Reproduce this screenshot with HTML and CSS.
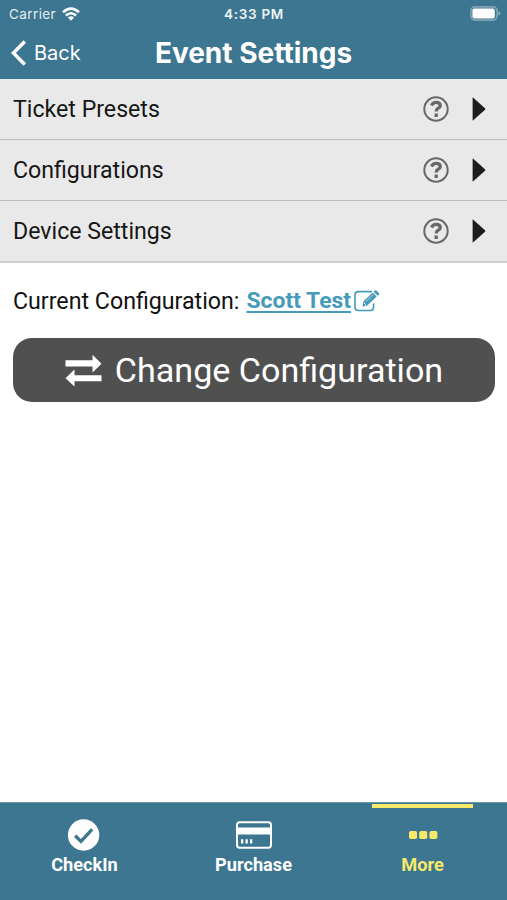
FILE: index.html
```html
<!DOCTYPE html>
<html lang="en">
<head>
<meta charset="utf-8">
<title>Event Settings</title>
<link rel="stylesheet" href="styles.css">
</head>
<body>
<div class="app">
  <header class="header">
    <div class="status">
      <div class="carrier"><span class="carrier-name">Carrier</span>
        <svg class="wifi" viewBox="0 0 18 14"><g fill="none" stroke="#fff" stroke-width="2.6"><path d="M1 5.3Q9-2.1 17 5.3"/><path d="M3.9 8.5Q9 4 14.1 8.5"/></g><path d="M5.9 10.6Q9 7.9 12.1 10.6L9 13.7Z" fill="#fff"/></svg>
      </div>
      <span class="time">4:33 PM</span>
      <svg class="battery" viewBox="0 0 31 15"><rect x=".9" y=".9" width="26.2" height="13.2" rx="4" fill="none" stroke="#fff" stroke-opacity=".35" stroke-width="1.6"/><rect x="2.4" y="2.6" width="22.4" height="9.8" rx="2" fill="#fff"/><path d="M28.5 5.2q1.7.6 1.7 2.2t-1.7 2.2z" fill="#fff" fill-opacity=".45"/></svg>
    </div>
    <nav class="navbar">
      <a class="back"><svg class="chevron" viewBox="0 0 16 26"><path d="M13.8 1.5 2.4 13l11.4 11.5" fill="none" stroke="#fff" stroke-width="3.5"/></svg><span>Back</span></a>
      <h1 class="title">Event Settings</h1>
    </nav>
  </header>
  <main class="content">
    <ul class="list">
      <li class="row"><span class="label">Ticket Presets</span><svg class="help" viewBox="0 0 26 26"><circle cx="13" cy="13" r="11.7"/><path class="mark" d="M8.5 9.5Q10 6.3 13 6.3q4.3 0 4.3 3.2 0 1.7-2.2 2.8-1.9 1-1.9 3.2M13.2 17.6v3.4"/></svg><svg class="arrow" viewBox="0 0 14 24"><path d="M.6.7Q.6.2 1.2.7L13 11.2q.7.8 0 1.6L1.2 23.3Q.6 23.8.6 23.2Z"/></svg></li>
      <li class="row"><span class="label">Configurations</span><svg class="help" viewBox="0 0 26 26"><circle cx="13" cy="13" r="11.7"/><path class="mark" d="M8.5 9.5Q10 6.3 13 6.3q4.3 0 4.3 3.2 0 1.7-2.2 2.8-1.9 1-1.9 3.2M13.2 17.6v3.4"/></svg><svg class="arrow" viewBox="0 0 14 24"><path d="M.6.7Q.6.2 1.2.7L13 11.2q.7.8 0 1.6L1.2 23.3Q.6 23.8.6 23.2Z"/></svg></li>
      <li class="row"><span class="label">Device Settings</span><svg class="help" viewBox="0 0 26 26"><circle cx="13" cy="13" r="11.7"/><path class="mark" d="M8.5 9.5Q10 6.3 13 6.3q4.3 0 4.3 3.2 0 1.7-2.2 2.8-1.9 1-1.9 3.2M13.2 17.6v3.4"/></svg><svg class="arrow" viewBox="0 0 14 24"><path d="M.6.7Q.6.2 1.2.7L13 11.2q.7.8 0 1.6L1.2 23.3Q.6 23.8.6 23.2Z"/></svg></li>
    </ul>
    <div class="current">
      <span class="current-label">Current Configuration:</span>
      <a class="current-name">Scott Test</a>
      <svg class="edit" viewBox="0 0 26 22"><path d="M18 1.6H4.2Q1 1.6 1 4.8v12.5q0 3.2 3.2 3.2h12.2q3.2 0 3.2-3.2v-3.8" fill="none" stroke="#459bb9" stroke-width="1.6"/><path d="m9.3 11.5 9.5-9.1 3.9 4-9.5 9.2-4.7.8zM19.6 1.7 20.7.6q.8-.8 1.7 0L25 3.1q.7.8 0 1.5l-1.4 1.2z" fill="#459bb9"/><path d="m11.7 11.8 7.5-7.2" stroke="#fff" stroke-width=".6"/><path d="m9.8 12.8 2 2" stroke="#fff" stroke-width="1"/></svg>
    </div>
    <button class="change"><svg class="swap" viewBox="0 0 37 33"><path d="M.5 6.3h27V.8l9 9-9 8.8v-6.2H.5zM36.5 21.3h-27v-5.8l-9 8.8 9 8.2v-5.3h27z" fill="#fff"/></svg><span>Change Configuration</span></button>
  </main>
  <footer class="tabs">
    <a class="tab"><svg class="tab-icon" viewBox="0 0 36 32"><circle cx="16.6" cy="16" r="15.7" fill="#fff"/><path d="m8.2 16.7 5.8 5.7L25.1 10.3" fill="none" stroke="#3d7690" stroke-width="3.3"/></svg><span>CheckIn</span></a>
    <a class="tab"><svg class="tab-icon" viewBox="0 0 36 32"><rect x="1" y="3.3" width="34" height="25.4" rx="2.8" fill="none" stroke="#fff" stroke-width="2"/><path d="M1 8.5h34v7H1zM5 20.3h2.3v4.3H5zM9.5 20.3h2.3v4.3H9.5zM14 20.3h2.3v4.3H14z" fill="#fff"/></svg><span>Purchase</span></a>
    <a class="tab active"><svg class="tab-icon" viewBox="0 0 36 32"><g fill="#f9e96b"><rect x="4" y="12" width="8" height="8" rx="1.8"/><rect x="14.2" y="12" width="8" height="8" rx="1.8"/><rect x="24.4" y="12" width="8" height="8" rx="1.8"/></g></svg><span>More</span></a>
  </footer>
</div>
</body>
</html>
```
FILE: styles.css
```css
* { box-sizing: border-box; }
body { margin: 0; background: #fff; font-family: Roboto, sans-serif; color: #161616; }
.app { height: 900px; display: flex; flex-direction: column; overflow: hidden; }
.header { height: 79px; flex: none; background: #3d7690; color: #fff; font-family: Inter, sans-serif; }
.status { height: 27px; padding: 0 6px 0 9px; display: grid; grid-template-columns: 1fr auto 1fr; align-items: center; }
.carrier { display: flex; align-items: center; gap: 6px; font-size: 13.5px; letter-spacing: .4px; color: #e4edf1; }
.wifi { width: 18px; height: 14px; }
.time { font-size: 13.5px; font-weight: 600; letter-spacing: .7px; color: #eef4f6; margin-right: 2px; }
.battery { width: 31px; height: 15px; justify-self: end; }
.navbar { height: 52px; padding: 0 11px; display: grid; grid-template-columns: 1fr auto 1fr; align-items: center; }
.back { display: flex; align-items: center; gap: 7px; font-size: 20px; }
.chevron { width: 16px; height: 26px; }
.title { margin: 0; font-size: 28px; font-weight: 700; line-height: 52px; }
.content { flex: 1; }
.list { margin: 0; padding: 0; list-style: none; border-top: 1px solid #e1ebee; }
.row { height: 61px; padding: 0 21px 0 13px; display: flex; align-items: center; background: #e9e9e9; border-bottom: 1px solid #bfbfbf; }
.row:first-child { height: 60px; padding-bottom: 1px; }
.row:last-child { height: 62px; border-bottom-width: 2px; border-color: #cfcfcf; }
.label { flex: 1; font-size: 23.15px; }
.help { width: 26px; height: 26px; fill: none; stroke: #686868; stroke-width: 2; }
.mark { stroke-width: 3.3; }
.arrow { width: 14px; height: 24px; margin-left: 23px; fill: #1d1d1d; }
.current { height: 75px; padding: 0 13px; display: flex; align-items: center; font-size: 23.2px; color: #111; }
.current-name { margin-left: 7px; color: #459bb9; font-size: 22.9px; font-weight: 700; text-decoration: underline; text-decoration-thickness: 1.5px; text-underline-offset: 3px; }
.edit { width: 26px; height: 22px; margin-left: 3px; }
.change { width: 482px; height: 64px; margin: 0 0 0 13px; border: 0; border-radius: 19px; padding: 0; display: flex; align-items: center; justify-content: center; gap: 13px; background: #505050; color: #fff; font: 34.1px Roboto, sans-serif; }
.swap { width: 37px; height: 33px; }
.tabs { height: 98px; flex: none; display: grid; grid-template-columns: repeat(3, 1fr); background: #3d7690; border-top: 1px solid #7198aa; color: #fff; }
.tab { position: relative; padding-top: 16px; display: flex; flex-direction: column; align-items: center; font-size: 18.2px; font-weight: 700; line-height: 27px; }
.tab-icon { width: 36px; height: 32px; }
.active { color: #f9e96b; }
.active::before { content: ""; position: absolute; top: 1px; left: 34px; width: 101px; height: 4px; background: #f9e96b; }
```
